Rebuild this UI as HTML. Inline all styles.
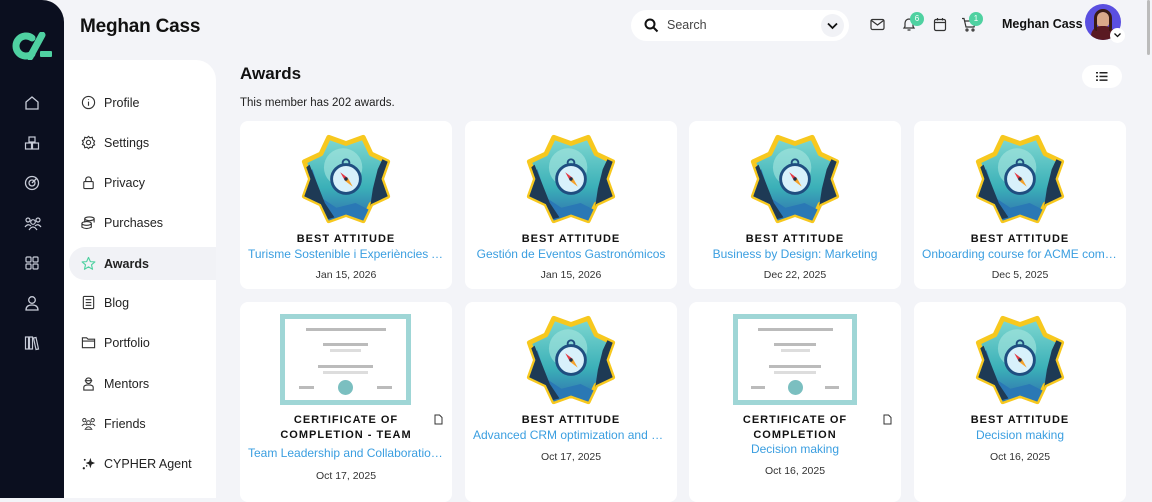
<!DOCTYPE html>
<html><head><meta charset="utf-8">
<style>
*{box-sizing:border-box;margin:0;padding:0}
body{width:1152px;height:498px;overflow:hidden;background:#f3f4f8;font-family:"Liberation Sans",sans-serif;color:#111;position:relative}
.side{position:absolute;left:0;top:0;width:64px;height:498px;background:#0b0f1f;border-top-right-radius:22px}
.side svg{position:absolute;left:24px}
.title{position:absolute;left:80px;top:16px;font-size:19px;font-weight:bold;letter-spacing:-0.2px}
.nav{position:absolute;left:64px;top:60px;width:152px;height:438px;background:#fff;border-top-right-radius:20px}
.nav .it{position:absolute;left:5px;width:147px;height:33px;display:flex;align-items:center;padding-left:12px;font-size:12.5px;color:#222}
.nav .it svg{width:15px;height:15px;margin-right:8px;flex:none}
.nav .act{background:#f1f2f6;border-radius:16px 0 0 16px;font-weight:bold}
.search{position:absolute;left:631px;top:10px;width:218px;height:31px;background:#fff;border-radius:16px}
.search span{position:absolute;left:36px;top:8px;font-size:12.5px;color:#444}
.dd{position:absolute;right:5px;top:4px;width:23px;height:23px;border-radius:50%;background:#f1f2f6}
.badge{position:absolute;width:14px;height:14px;border-radius:50%;background:#4fd1a1;color:#fff;font-size:8px;text-align:center;line-height:14px}
.card{position:absolute;width:212px;background:#fff;border-radius:8px;text-align:center}
.card .t{position:absolute;left:0;right:0;font-size:11px;font-weight:bold;letter-spacing:1px;color:#111;line-height:15px}
.card .s{position:absolute;left:8px;right:8px;font-size:12px;color:#3a9ee0;white-space:nowrap;overflow:hidden;text-overflow:ellipsis}
.card .d{position:absolute;left:0;right:0;font-size:10.5px;color:#333}
.card svg.b{position:absolute;left:58px;width:96px;height:96px}
.cert{position:absolute;left:40px;width:131px;height:91px;border:5px solid #9fd6d6;background:#fff}
.cert i{position:absolute;display:block;background:#bbb;height:3px}
</style></head><body>
<svg width="0" height="0" style="position:absolute">
<defs>
<linearGradient id="g1" x1="0" y1="0" x2="0" y2="1"><stop offset="0" stop-color="#7fd8d0"/><stop offset="0.6" stop-color="#3bb0b8"/><stop offset="1" stop-color="#2f6fae"/></linearGradient>
<clipPath id="cp"><polygon points="17.99,-43.42 26.16,-26.16 43.42,-17.99 37,0 43.42,17.99 26.16,26.16 17.99,43.42 0,37 -17.99,43.42 -26.16,26.16 -43.42,17.99 -37,0 -43.42,-17.99 -26.16,-26.16 -17.99,-43.42 0,-37"/></clipPath>
<symbol id="bdg" viewBox="-50 -50 100 100">
<polygon points="17.99,-43.42 26.16,-26.16 43.42,-17.99 37,0 43.42,17.99 26.16,26.16 17.99,43.42 0,37 -17.99,43.42 -26.16,26.16 -43.42,17.99 -37,0 -43.42,-17.99 -26.16,-26.16 -17.99,-43.42 0,-37" fill="url(#g1)" stroke="#f7c81e" stroke-width="5" stroke-linejoin="round"/>
<g clip-path="url(#cp)">
<circle cx="-3" cy="-12" r="20" fill="#a9e6e0" opacity=".6"/>
<path d="M-50 0 L-35 -10 L-25 20 L-10 30 L10 25 L30 35 L50 20 L50 50 L-50 50Z" fill="#2a78b5"/>
<path d="M-50 -5 L-38 -15 L-30 5 L-22 25 L-12 40 L-50 50Z" fill="#1e3a55"/>
<path d="M50 -25 L40 -25 L33 -10 L28 10 L25 30 L35 50 L50 50Z" fill="#1e3a55"/>
</g>
<circle cx="0" cy="-17" r="3.5" fill="none" stroke="#1f4e80" stroke-width="2"/>
<circle cx="0" cy="0" r="15" fill="#d8f1fb" stroke="#1f4e80" stroke-width="3"/>
<polygon points="-6,-7 2,-1 -1,2" fill="#e53945"/>
<polygon points="7,8 2,-1 -1,2" fill="#f4a12a"/>
<circle cx="0" cy="0" r="1.8" fill="#1f2f45"/>
</symbol>
</defs></svg>

<div class="side">
<svg style="left:12px;top:32px" width="42" height="28" viewBox="0 0 42 28"><path d="M20 6 A10 10 0 1 0 20 22" fill="none" stroke="#4fd1a1" stroke-width="7" stroke-linecap="round"/><path d="M30 3 L18 25" stroke="#4fd1a1" stroke-width="7" stroke-linecap="round"/><rect x="28" y="19" width="12" height="6" fill="#4fd1a1" rx="1"/></svg>
<svg style="top:95px" width="16" height="16" viewBox="0 0 16 16" fill="none" stroke="#c8ccd8" stroke-width="1.3"><path d="M2 7 L8 2 L14 7 V14 H2Z"/></svg>
<svg style="top:135px" width="16" height="16" viewBox="0 0 16 16" fill="none" stroke="#c8ccd8" stroke-width="1.2"><rect x="5" y="2" width="6" height="5"/><rect x="1.5" y="8" width="6" height="6"/><rect x="8.5" y="8" width="6" height="6"/></svg>
<svg style="top:175px" width="16" height="16" viewBox="0 0 16 16" fill="none" stroke="#c8ccd8" stroke-width="1.3"><circle cx="8" cy="8" r="6.5"/><circle cx="8" cy="8" r="3"/><path d="M8 8 L13 3"/></svg>
<svg style="top:215px" width="18" height="16" viewBox="0 0 18 16" fill="none" stroke="#c8ccd8" stroke-width="1.2"><circle cx="4" cy="5" r="2"/><circle cx="14" cy="5" r="2"/><circle cx="9" cy="7" r="2.3"/><path d="M1 12 Q4 8 7 11 M11 11 Q14 8 17 12 M5 15 Q9 9 13 15"/></svg>
<svg style="top:255px" width="16" height="16" viewBox="0 0 16 16" fill="none" stroke="#c8ccd8" stroke-width="1.2"><rect x="2" y="2" width="5" height="5" rx="1"/><rect x="9" y="2" width="5" height="5" rx="1"/><rect x="2" y="9" width="5" height="5" rx="1"/><rect x="9" y="9" width="5" height="5" rx="1"/></svg>
<svg style="top:295px" width="16" height="16" viewBox="0 0 16 16" fill="none" stroke="#c8ccd8" stroke-width="1.3"><circle cx="8" cy="5" r="3.3"/><path d="M2 15 Q2 10 8 10 Q14 10 14 15Z"/></svg>
<svg style="top:335px" width="16" height="16" viewBox="0 0 16 16" fill="none" stroke="#c8ccd8" stroke-width="1.2"><rect x="1.5" y="2" width="3" height="12"/><rect x="5.5" y="2" width="3" height="12"/><path d="M9.5 3 L12 2.5 L14.5 14 L12 14.5Z"/></svg>
</div>

<div class="title">Meghan Cass</div>

<div class="nav">
<div class="it" style="top:26px"><svg viewBox="0 0 16 16" fill="none" stroke="#333" stroke-width="1.2"><circle cx="8" cy="8" r="6.5"/><path d="M8 7 V11.5 M8 4.5 V5.2"/></svg>Profile</div>
<div class="it" style="top:66px"><svg viewBox="0 0 16 16" fill="none" stroke="#333" stroke-width="1.2"><circle cx="8" cy="8" r="2.3"/><path d="M8 1.5 L9.5 3 L12 2.5 L12.5 5 L14.5 6.5 L13.5 8.5 L14.5 10.5 L12.5 11.5 L12 13.5 L9.5 13 L8 14.5 L6.5 13 L4 13.5 L3.5 11 L1.5 10 L2.5 8 L1.5 6 L3.5 5 L4 2.5 L6.5 3Z"/></svg>Settings</div>
<div class="it" style="top:106px"><svg viewBox="0 0 16 16" fill="none" stroke="#333" stroke-width="1.2"><rect x="3" y="7" width="10" height="7.5" rx="1"/><path d="M5 7 V5 A3 3 0 0 1 11 5 V7"/></svg>Privacy</div>
<div class="it" style="top:146px"><svg viewBox="0 0 16 16" fill="none" stroke="#333" stroke-width="1.2"><ellipse cx="9" cy="4" rx="5" ry="2"/><path d="M4 4 V8 M14 4 V8"/><ellipse cx="6" cy="9" rx="5" ry="2"/><path d="M1 9 V13 Q6 16 11 13 V9"/></svg>Purchases</div>
<div class="it act" style="top:187px"><svg viewBox="0 0 16 16" fill="none" stroke="#4fd1a1" stroke-width="1.2" stroke-linejoin="round"><path d="M8 1.5 L10 6 L14.8 6.3 L11.2 9.4 L12.3 14.2 L8 11.6 L3.7 14.2 L4.8 9.4 L1.2 6.3 L6 6Z"/></svg>Awards</div>
<div class="it" style="top:226px"><svg viewBox="0 0 16 16" fill="none" stroke="#333" stroke-width="1.2"><rect x="2.5" y="1.5" width="11" height="13" rx="1"/><path d="M5 5 H11 M5 8 H11 M5 11 H11"/></svg>Blog</div>
<div class="it" style="top:266px"><svg viewBox="0 0 16 16" fill="none" stroke="#333" stroke-width="1.2"><path d="M1.5 3 H6 L7.5 4.5 H14.5 V13.5 H1.5Z M1.5 6.5 H14.5"/></svg>Portfolio</div>
<div class="it" style="top:307px"><svg viewBox="0 0 16 16" fill="none" stroke="#333" stroke-width="1.2"><circle cx="8" cy="5" r="3"/><path d="M4 5 H12 M3 15 V12 Q3 9.5 8 9.5 Q13 9.5 13 12 V15Z"/></svg>Mentors</div>
<div class="it" style="top:347px"><svg viewBox="0 0 18 16" fill="none" stroke="#333" stroke-width="1.1"><circle cx="4" cy="4" r="2"/><circle cx="14" cy="4" r="2"/><circle cx="9" cy="7" r="2.3"/><path d="M1 11 Q4 7 7 10 M11 10 Q14 7 17 11 M5 15 Q9 9 13 15Z"/></svg>Friends</div>
<div class="it" style="top:387px"><svg viewBox="0 0 16 16" fill="#222"><path d="M10 2 L11.3 6 L15 7.5 L11.3 9 L10 13 L8.7 9 L5 7.5 L8.7 6Z"/><circle cx="4" cy="4" r="1"/><circle cx="3" cy="13" r="1.2"/><circle cx="6" cy="10.5" r=".8"/></svg>CYPHER Agent</div>
</div>

<div class="search">
<svg style="position:absolute;left:13px;top:8px" width="15" height="15" viewBox="0 0 15 15" fill="none" stroke="#111" stroke-width="2"><circle cx="6" cy="6" r="4.5"/><path d="M9.5 9.5 L13.5 13.5"/></svg>
<span>Search</span>
<div class="dd"><svg style="position:absolute;left:6px;top:8px" width="11" height="8" viewBox="0 0 11 8" fill="none" stroke="#111" stroke-width="1.8"><path d="M1 1.5 L5.5 6 L10 1.5"/></svg></div>
</div>
<svg style="position:absolute;left:870px;top:18px" width="15" height="13" viewBox="0 0 15 13" fill="none" stroke="#333" stroke-width="1.2"><rect x="1" y="1.5" width="13" height="10" rx="1.5"/><path d="M1.5 2.5 L7.5 7 L13.5 2.5"/></svg>
<svg style="position:absolute;left:902px;top:16px" width="14" height="16" viewBox="0 0 14 16" fill="none" stroke="#333" stroke-width="1.2"><path d="M2 12 H12 L11 10.5 V7 A4 4 0 0 0 3 7 V10.5Z M5.5 14 H8.5"/></svg>
<div class="badge" style="left:910px;top:12px">6</div>
<svg style="position:absolute;left:933px;top:17px" width="14" height="15" viewBox="0 0 14 15" fill="none" stroke="#333" stroke-width="1.2"><rect x="1.5" y="2.5" width="11" height="11" rx="1.5"/><path d="M1.5 5.5 H12.5 M4.5 1 V3.5 M9.5 1 V3.5"/></svg>
<svg style="position:absolute;left:961px;top:17px" width="16" height="15" viewBox="0 0 16 15" fill="none" stroke="#333" stroke-width="1.2"><path d="M1 1.5 H3 L5 10 H13 L14.5 4 H4"/><circle cx="6" cy="13" r="1"/><circle cx="12" cy="13" r="1"/></svg>
<div class="badge" style="left:969px;top:12px">1</div>
<div style="position:absolute;left:1002px;top:17px;font-size:12.5px;font-weight:bold">Meghan Cass</div>
<div style="position:absolute;left:1085px;top:4px;width:36px;height:36px;border-radius:50%;background:#5a4fe0;overflow:hidden"><div style="position:absolute;left:11px;top:8px;width:14px;height:16px;border-radius:50%;background:#d9a88a"></div><div style="position:absolute;left:6px;top:22px;width:24px;height:20px;border-radius:10px 10px 0 0;background:#5a1a22"></div><div style="position:absolute;left:9px;top:5px;width:18px;height:22px;border-radius:9px 9px 3px 3px;border:3px solid #3a1b14;border-bottom:none"></div></div>
<div style="position:absolute;left:1110px;top:28px;width:15px;height:15px;border-radius:50%;background:#fff"><svg style="position:absolute;left:4px;top:5px" width="7" height="5" viewBox="0 0 7 5" fill="none" stroke="#111" stroke-width="1.3"><path d="M.5 .5 L3.5 3.5 L6.5 .5"/></svg></div>
<div style="position:absolute;left:1147px;top:0;width:3px;height:55px;background:#bbb;border-radius:2px"></div>

<div style="position:absolute;left:240px;top:64px;font-size:17px;font-weight:bold">Awards</div>
<div style="position:absolute;left:240px;top:97px;font-size:11.5px;color:#222">This member has 202 awards.</div>
<div style="position:absolute;left:1082px;top:65px;width:40px;height:23px;border-radius:12px;background:#fff"><svg style="position:absolute;left:14px;top:6px" width="12" height="11" viewBox="0 0 12 11" fill="#222"><rect x="0" y="1" width="2" height="1.5"/><rect x="3.5" y="1" width="8" height="1.5"/><rect x="0" y="4.7" width="2" height="1.5"/><rect x="3.5" y="4.7" width="8" height="1.5"/><rect x="0" y="8.4" width="2" height="1.5"/><rect x="3.5" y="8.4" width="8" height="1.5"/></svg></div>

<!-- row 1 -->
<div class="card" style="left:240px;top:121px;height:168px"><svg class="b" style="top:10px"><use href="#bdg"/></svg><div class="t" style="top:111px">BEST ATTITUDE</div><div class="s" style="top:126px">Turisme Sostenible i Experiències Autèntiques</div><div class="d" style="top:148px">Jan 15, 2026</div></div>
<div class="card" style="left:465px;top:121px;height:168px"><svg class="b" style="top:10px"><use href="#bdg"/></svg><div class="t" style="top:111px">BEST ATTITUDE</div><div class="s" style="top:126px">Gestión de Eventos Gastronómicos</div><div class="d" style="top:148px">Jan 15, 2026</div></div>
<div class="card" style="left:689px;top:121px;height:168px"><svg class="b" style="top:10px"><use href="#bdg"/></svg><div class="t" style="top:111px">BEST ATTITUDE</div><div class="s" style="top:126px">Business by Design: Marketing</div><div class="d" style="top:148px">Dec 22, 2025</div></div>
<div class="card" style="left:914px;top:121px;height:168px"><svg class="b" style="top:10px"><use href="#bdg"/></svg><div class="t" style="top:111px">BEST ATTITUDE</div><div class="s" style="top:126px">Onboarding course for ACME company</div><div class="d" style="top:148px">Dec 5, 2025</div></div>

<!-- row 2 -->
<div class="card" style="left:240px;top:302px;height:200px">
<div class="cert" style="top:12px"><i style="left:21px;top:9px;width:80px"></i><i style="left:38px;top:24px;width:45px"></i><i style="left:45px;top:30px;width:31px;background:#ddd"></i><i style="left:33px;top:46px;width:55px"></i><i style="left:38px;top:52px;width:45px;background:#ddd"></i><i style="left:14px;top:67px;width:15px"></i><i style="left:92px;top:67px;width:15px"></i><div style="position:absolute;left:53px;top:61px;width:15px;height:15px;border-radius:50%;background:#7bbfc0"></div></div>
<svg style="position:absolute;left:194px;top:112px" width="9" height="11" viewBox="0 0 9 11" fill="none" stroke="#333" stroke-width="1"><path d="M1 1 H5.5 L8 3.5 V10 H1Z"/></svg>
<div class="t" style="top:111px">CERTIFICATE OF<br>COMPLETION - TEAM</div><div class="s" style="top:144px">Team Leadership and Collaboration Skills</div><div class="d" style="top:168px">Oct 17, 2025</div></div>
<div class="card" style="left:465px;top:302px;height:200px"><svg class="b" style="top:10px"><use href="#bdg"/></svg><div class="t" style="top:111px">BEST ATTITUDE</div><div class="s" style="top:126px">Advanced CRM optimization and automation</div><div class="d" style="top:149px">Oct 17, 2025</div></div>
<div class="card" style="left:689px;top:302px;height:200px">
<div class="cert" style="top:12px;left:44px;width:124px"><i style="left:20px;top:9px;width:75px"></i><i style="left:36px;top:24px;width:42px"></i><i style="left:43px;top:30px;width:29px;background:#ddd"></i><i style="left:31px;top:46px;width:52px"></i><i style="left:36px;top:52px;width:42px;background:#ddd"></i><i style="left:13px;top:67px;width:14px"></i><i style="left:87px;top:67px;width:14px"></i><div style="position:absolute;left:50px;top:61px;width:15px;height:15px;border-radius:50%;background:#7bbfc0"></div></div>
<svg style="position:absolute;left:194px;top:112px" width="9" height="11" viewBox="0 0 9 11" fill="none" stroke="#333" stroke-width="1"><path d="M1 1 H5.5 L8 3.5 V10 H1Z"/></svg>
<div class="t" style="top:111px">CERTIFICATE OF<br>COMPLETION</div><div class="s" style="top:140px">Decision making</div><div class="d" style="top:163px">Oct 16, 2025</div></div>
<div class="card" style="left:914px;top:302px;height:200px"><svg class="b" style="top:10px"><use href="#bdg"/></svg><div class="t" style="top:111px">BEST ATTITUDE</div><div class="s" style="top:126px">Decision making</div><div class="d" style="top:149px">Oct 16, 2025</div></div>
</body></html>
